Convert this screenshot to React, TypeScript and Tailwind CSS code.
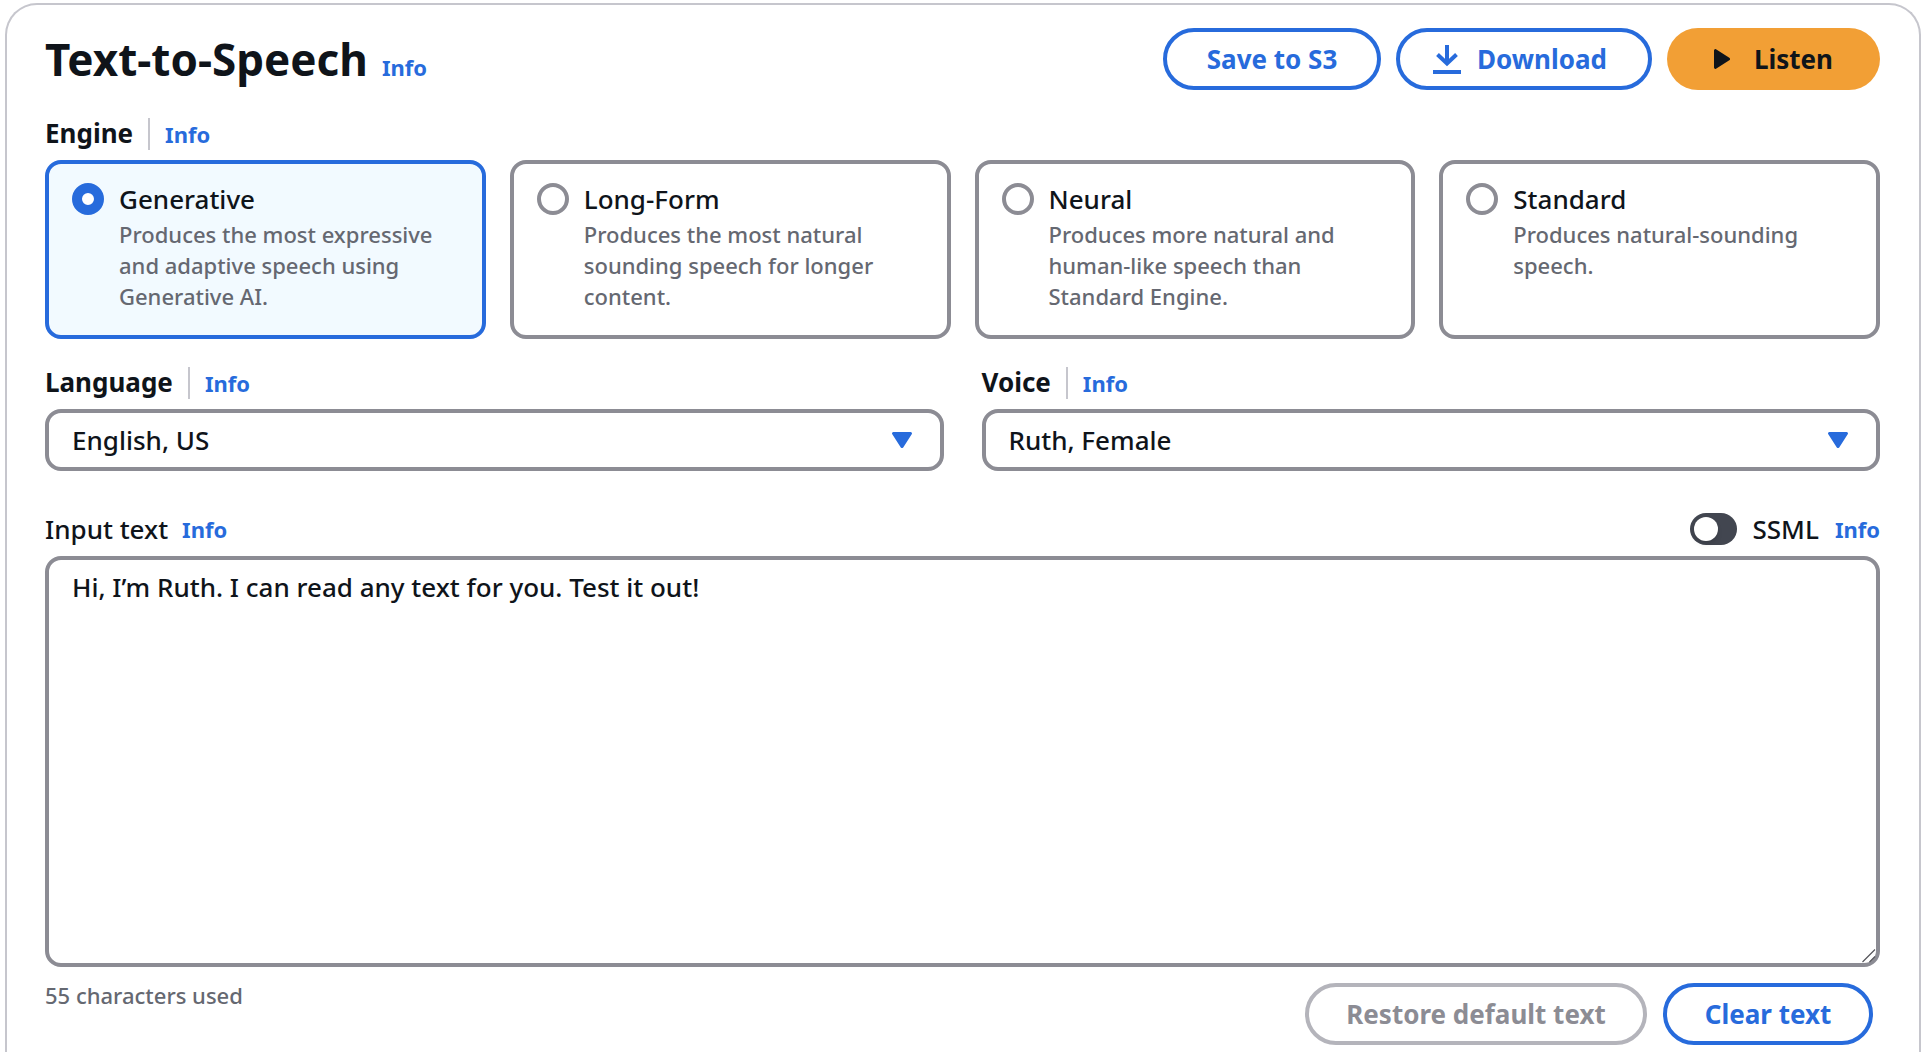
// App.tsx — Text-to-Speech panel: engine, language, voice and the text to be read

import { useState } from "react";
import clsx from "clsx";

const DEFAULT_TEXT = "Hi, I’m Ruth. I can read any text for you. Test it out!";

const ENGINES: { value: string; label: string; description: string }[] = [
  { value: "generative", label: "Generative", description: "Produces the most expressive and adaptive speech using Generative AI." },
  { value: "long-form",  label: "Long-Form",  description: "Produces the most natural sounding speech for longer content." },
  { value: "neural",     label: "Neural",     description: "Produces more natural and human-like speech than Standard Engine." },
  { value: "standard",   label: "Standard",   description: "Produces natural-sounding speech." },
];

const OUTLINE_BUTTON =
  "flex h-[62px] items-center justify-center rounded-full border-4 border-[#276bdc] bg-white text-[26px] font-bold text-[#276bdc] hover:bg-[#f2faff] disabled:border-[#b4b4bb] disabled:text-[#8c8c94] disabled:hover:bg-white";

function InfoLink({ topic }: { topic: string }) {
  return (
    <a href="#info" aria-label={`Info about ${topic}`} className="text-[22px] leading-8 font-bold text-[#276bdc] hover:underline">
      Info
    </a>
  );
}

function Divider() {
  return <span className="mx-[15px] h-8 w-0.5 bg-[#c6c6cd]" />;
}

interface SelectFieldProps {
  id: string;
  label: string;
  options: string[];
}

function SelectField({ id, label, options }: SelectFieldProps) {
  return (
    <div className="flex flex-col gap-[10px]">
      <div className="flex items-start">
        <label htmlFor={id} className="text-[26px] leading-[30px] font-bold">{label}</label>
        <Divider />
        <InfoLink topic={label} />
      </div>
      <div className="relative">
        <select id={id} className="h-[62px] w-full appearance-none rounded-2xl border-4 border-[#8c8c94] bg-white px-[23px] text-[26px] font-medium">
          {options.map((o) => (
            <option key={o}>{o}</option>
          ))}
        </select>
        <svg className="pointer-events-none absolute top-[23px] right-8 h-4 w-5" viewBox="0 0 20 16" fill="#276bdc">
          <path d="M1.5 0h17a1.4 1.4 0 0 1 1.2 2.2l-8.5 13.2a1.4 1.4 0 0 1-2.4 0L.3 2.2A1.4 1.4 0 0 1 1.5 0z" />
        </svg>
      </div>
    </div>
  );
}

export default function App() {
  const [engine, setEngine] = useState("generative");
  const [ssml, setSsml] = useState(false);
  const [text, setText] = useState(DEFAULT_TEXT);

  return (
    <div className="bg-white pt-[3px] pr-[7px] pl-[5px] font-['Noto_Sans',sans-serif] text-[#0f141a]">
      <main className="rounded-t-[32px] border-2 border-b-0 border-[#c6c6cd] pt-[23px] pr-[39px] pb-[7px] pl-[38px]">
        {/* Header */}
        <header className="flex items-center justify-between">
          <div className="flex items-baseline gap-[14px]">
            <h1 className="text-[44px] leading-[62px] font-bold">Text-to-Speech</h1>
            <InfoLink topic="Text-to-Speech" />
          </div>
          <div className="flex gap-[15px]">
            <button type="button" className={clsx(OUTLINE_BUTTON, "w-[218px]")}>Save to S3</button>
            <button type="button" className={clsx(OUTLINE_BUTTON, "w-[256px] gap-4 pr-2")}>
              <svg className="h-[29px] w-7" viewBox="0 0 28 29" fill="none" stroke="currentColor" strokeWidth="4">
                <path d="M14 0v18M4.5 9.5l9.5 9 9.5-9" />
                <path d="M0 27h28" />
              </svg>
              Download
            </button>
            <button
              type="button"
              className="flex h-[62px] w-[213px] items-center justify-center gap-6 rounded-full bg-[#f29f35] text-[26px] font-bold text-[#0f141a] hover:bg-[#fa6f00]"
            >
              <svg className="h-5 w-4" viewBox="0 0 16 20" fill="currentColor">
                <path d="M0 1.6A1.5 1.5 0 0 1 2.4.4l12.9 8.4a1.5 1.5 0 0 1 0 2.4L2.4 19.6A1.5 1.5 0 0 1 0 18.4z" />
              </svg>
              Listen
            </button>
          </div>
        </header>

        {/* Engine */}
        <fieldset className="mt-7" aria-labelledby="engine-label">
          <div className="flex items-start">
            <span id="engine-label" className="text-[26px] leading-[30px] font-bold">Engine</span>
            <Divider />
            <InfoLink topic="Engine" />
          </div>
          <div className="mt-[10px] grid grid-cols-4 gap-6">
            {ENGINES.map((e) => (
              <label
                key={e.value}
                className={clsx(
                  "flex min-h-[179px] cursor-pointer gap-[15px] rounded-2xl border-4 px-[23px] pt-4 pb-5",
                  engine === e.value ? "border-[#276bdc] bg-[#f2faff]" : "border-[#8c8c94] bg-white",
                )}
              >
                <input
                  type="radio"
                  name="engine"
                  value={e.value}
                  checked={engine === e.value}
                  onChange={() => setEngine(e.value)}
                  aria-describedby={`${e.value}-description`}
                  className="mt-[3px] size-8 shrink-0 appearance-none rounded-full border-4 border-[#8c8c94] bg-white checked:border-10 checked:border-[#276bdc]"
                />
                <span>
                  <span className="block text-[26px] leading-[38px] font-medium">{e.label}</span>
                  <span id={`${e.value}-description`} className="mt-px block text-[22px] leading-[31px] font-medium text-[#656871]">
                    {e.description}
                  </span>
                </span>
              </label>
            ))}
          </div>
        </fieldset>

        {/* Language and voice */}
        <div className="mt-7 grid grid-cols-2 gap-[38px]">
          <SelectField id="language" label="Language" options={["English, US", "English, British", "Spanish, US"]} />
          <SelectField id="voice" label="Voice" options={["Ruth, Female", "Matthew, Male", "Danielle, Female"]} />
        </div>

        {/* Input text */}
        <div className="mt-[42px] flex items-center justify-between">
          <div className="flex items-center gap-[14px]">
            <label htmlFor="input-text" className="text-[26px] leading-8 font-medium">Input text</label>
            <InfoLink topic="Input text" />
          </div>
          <div className="flex items-center gap-4">
            <label className="flex cursor-pointer items-center gap-4 text-[26px] leading-8 font-medium">
              <input
                type="checkbox"
                role="switch"
                checked={ssml}
                onChange={(e) => setSsml(e.target.checked)}
                className="flex h-8 w-[47px] appearance-none items-center rounded-full bg-[#424650] px-1 before:size-6 before:rounded-full before:bg-white before:shadow-md checked:justify-end checked:bg-[#276bdc]"
              />
              SSML
            </label>
            <InfoLink topic="SSML" />
          </div>
        </div>
        <div className="relative mt-[11px]">
          <textarea
            id="input-text"
            value={text}
            onChange={(e) => setText(e.target.value)}
            className="block h-[411px] w-full resize-y rounded-2xl border-4 border-[#8c8c94] bg-white px-[23px] py-[9px] text-[26px] leading-9 font-medium [&::-webkit-resizer]:hidden"
          />
          {/* Resize grip */}
          <svg className="pointer-events-none absolute right-1 bottom-1 size-[14px]" viewBox="0 0 14 14" stroke="#56565c" strokeWidth="1.2">
            <path d="M.5 13L13 .5M7.5 13L13 7.5" />
          </svg>
        </div>

        {/* Footer */}
        <div className="mt-4 flex items-start justify-between pr-[7px]">
          <p className="-mt-1 text-[22px] leading-8 font-medium text-[#656871]">{text.length} characters used</p>
          <div className="flex gap-4">
            <button
              type="button"
              disabled={text === DEFAULT_TEXT}
              onClick={() => setText(DEFAULT_TEXT)}
              className={clsx(OUTLINE_BUTTON, "w-[342px]")}
            >
              Restore default text
            </button>
            <button type="button" onClick={() => setText("")} className={clsx(OUTLINE_BUTTON, "w-[210px]")}>
              Clear text
            </button>
          </div>
        </div>
      </main>
    </div>
  );
}
